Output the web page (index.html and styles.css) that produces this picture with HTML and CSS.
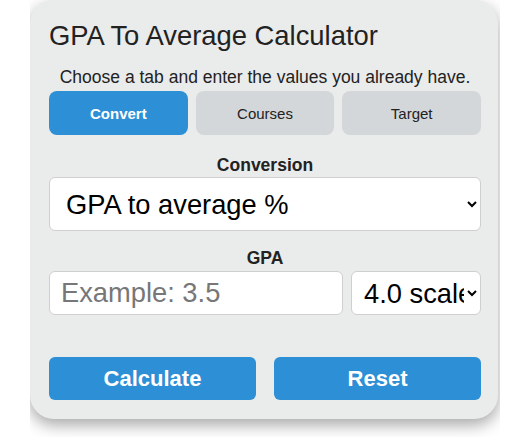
FILE: index.html
```html
<!DOCTYPE html>
<html lang="en">
<head>
  <meta charset="UTF-8">
  <meta name="viewport" content="width=device-width, initial-scale=1.0">
  <title>GPA To Average Calculator</title>
  <link rel="stylesheet" href="styles.css">
</head>
<body>

  <div class="frame">
    <div class="card">
      <h2 class="title">GPA To Average Calculator</h2>
      <p class="intro">Choose a tab and enter the values you already have.</p>

      <!-- Tabs -->
      <div class="tabs">
        <button class="tab active">Convert</button>
        <button class="tab">Courses</button>
        <button class="tab">Target</button>
      </div>

      <!-- Conversion type -->
      <div class="field">
        <label class="label" for="mode">Conversion</label>
        <select id="mode" class="select big">
          <option>GPA to average %</option>
          <option>Average % to GPA</option>
        </select>
      </div>

      <!-- GPA value -->
      <div class="field">
        <label class="label" for="gpa">GPA</label>
        <div class="row">
          <input type="text" id="gpa" class="input" placeholder="Example: 3.5">
          <select class="select small">
            <option>4.0 scale</option>
            <option>5.0 scale</option>
          </select>
        </div>
      </div>

      <div class="actions">
        <button class="button">Calculate</button>
        <button class="button">Reset</button>
      </div>
    </div>
  </div>

</body>
</html>
```

FILE: styles.css
```css
body {
  font-family: "Liberation Sans", Arial, sans-serif;
  background-color: #fff;
  margin: 0;
  padding: 0;
  color: #222;
}

.frame {
  margin-left: 30px;
  width: 470px;
  height: 437px;
  overflow: hidden;
}

.card {
  width: 468px;
  box-sizing: border-box;
  background: #eaebeb;
  border-radius: 24px;
  padding: 20px 17px 19px 19px;
  box-shadow: 0 6px 16px rgba(0, 0, 0, 0.35);
}

.title {
  margin: 0;
  font-size: 27.4px;
  font-weight: normal;
  line-height: 31px;
}

.intro {
  margin: 16px 0 4px;
  font-size: 17.5px;
  line-height: 20px;
  text-align: center;
}

/* Tabs */
.tabs {
  display: grid;
  grid-template-columns: repeat(3, 1fr);
  gap: 8px;
}

.tab {
  height: 44px;
  border: none;
  border-radius: 8px;
  background: #d4d7d9;
  color: #222;
  font-family: inherit;
  font-size: 15px;
  cursor: pointer;
}

.tab.active {
  background: #2d8fd6;
  color: #fff;
  font-weight: bold;
}

/* Fields */
.field {
  margin-top: 20px;
}

.field + .field {
  margin-top: 17px;
}

.label {
  display: block;
  text-align: center;
  font-weight: bold;
  font-size: 17.5px;
  line-height: 20px;
  margin-bottom: 2px;
}

.field + .field .label {
  margin-bottom: 3px;
}

.select,
.input {
  box-sizing: border-box;
  background: #fff;
  border: 1px solid #cfcfcf;
  border-radius: 6px;
  font-family: inherit;
  font-size: 27.3px;
  color: #000;
  margin: 0;
}

.select.big {
  width: 100%;
  height: 54px;
  padding: 0 12px;
}

.row {
  display: grid;
  grid-template-columns: 1fr 130px;
  gap: 8px;
}

.input {
  height: 44px;
  padding: 0 11px;
  width: 100%;
}

.input::placeholder {
  color: #777;
}

.select.small {
  height: 44px;
  padding: 0 0 0 8px;
}

/* Buttons */
.actions {
  display: grid;
  grid-template-columns: 1fr 1fr;
  gap: 18px;
  margin-top: 42px;
}

.button {
  height: 43px;
  border: none;
  border-radius: 6px;
  background: #2d8fd6;
  color: #fff;
  font-family: inherit;
  font-size: 22px;
  font-weight: bold;
  cursor: pointer;
}

.button:hover {
  opacity: 0.9;
}
```
